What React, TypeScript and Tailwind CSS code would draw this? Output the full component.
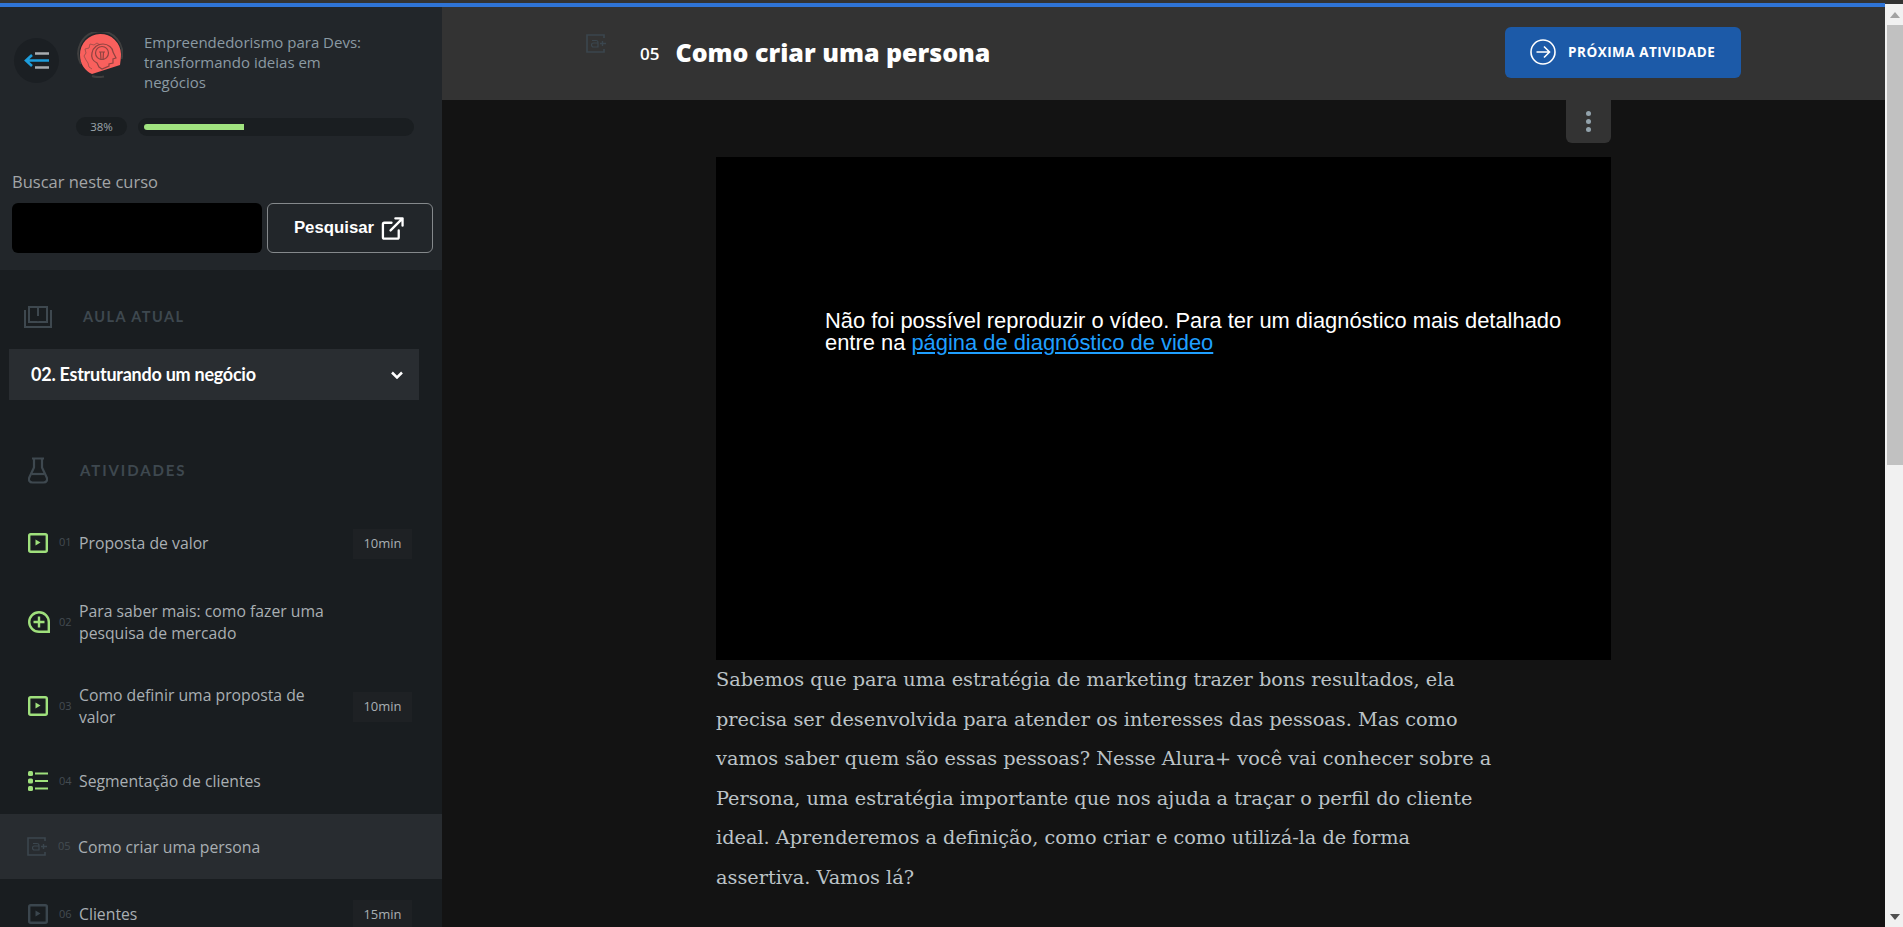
const SIDE_TEXT = 'font-["Open_Sans",sans-serif]'

function BackIcon() {
  return (
    <svg width="25" height="17" viewBox="0 0 25 17" fill="none">
      <path d="M11 1.500h14M11 15.500h14" stroke="#a8adb1" strokeWidth="2.600" />
      <path d="M25 8.500H2M8 3 2 8.500 8 14" stroke="#1d9ddc" strokeWidth="2.600" />
    </svg>
  )
}

function CourseLogo() {
  return (
    <svg width="46" height="46" viewBox="0 0 46 46" fill="none">
      <path d="M4 32A22 22 0 1 1 44.500 27M15 44a22 22 0 0 0 12 .500" stroke="#3f3f3f" strokeWidth="2" />
      <path d="M3 23a20.500 20.500 0 0 1 41-1c0 4-.5 7-1 11L15 42C8 39 3 32 3 23Z" fill="#f9605d" />
      <path d="M9 28l-2-4 2-3-1-4 4-1 1-4 4 1 3-2 3 2M9 28l2 3 1 4 3 2" stroke="#a9504c" strokeWidth="1" />
      <path d="M20 31c-4-2-6-6-5-10 1-6 6-9 11-9s10 4 10 8l3 6-3 1v4l-4 1v2l-7 3-3-2-2-4Z" stroke="#8f4340" strokeWidth="1.200" />
      <circle cx="25" cy="21" r="6.500" stroke="#8f4340" strokeWidth="1.200" />
      <path d="M22 20h6M23.500 20l.5 8M26.500 20l-.5 8" stroke="#8f4340" strokeWidth="1.200" />
    </svg>
  )
}

function ExternalIcon() {
  return (
    <svg width="23" height="23" viewBox="0 0 24 24" fill="none" stroke="#fff" strokeWidth="2.400" strokeLinecap="round" strokeLinejoin="round">
      <path d="M11 6H3.500A1.500 1.500 0 0 0 2 7.500V21a1.500 1.500 0 0 0 1.500 1.500H17a1.500 1.500 0 0 0 1.500-1.500v-7" />
      <path d="M15 1.500h7.500V9M22.500 1.500 10 14" />
    </svg>
  )
}

function BookIcon() {
  return (
    <svg width="28" height="22" viewBox="0 0 28 22" fill="none" stroke="#3e484f" strokeWidth="2">
      <path d="M5 16V1h8c1 0 1 1 1 2 0-1 0-2 1-2h8v15h-8c-1 0-1 1-1 1s0-1-1-1H5Z" />
      <path d="M1 4v17h26V4" />
      <path d="M14 3v7" />
    </svg>
  )
}

function FlaskIcon() {
  return (
    <svg width="20" height="27" viewBox="0 0 20 27" fill="none" stroke="#3e484f" strokeWidth="2.200" strokeLinejoin="round">
      <path d="M4 1.500h12M6 1.500v9L1.500 20c-1.500 3 0 5.500 3 5.500h11c3 0 4.500-2.500 3-5.500L14 10.500v-9" />
      <path d="M4 17h12" />
    </svg>
  )
}

function VideoIcon({ color }: { color: string }) {
  return (
    <svg width="20" height="20" viewBox="0 0 20 20" fill="none">
      <rect x="1.200" y="1.200" width="17.600" height="17.600" rx="1.500" stroke={color} strokeWidth="2.400" />
      <path d="M7.500 6.500v6l5-3-5-3Z" fill={color} />
    </svg>
  )
}

function PlusIcon() {
  return (
    <svg width="22" height="22" viewBox="0 0 22 22" fill="none" stroke="#9fe07c" strokeWidth="2.400">
      <path d="M20.500 20.800H11a9.800 9.800 0 1 1 9.800-9.800v9.800Z" />
      <path d="M11 5.500v11M5.500 11h11" />
    </svg>
  )
}

function ListIcon() {
  return (
    <svg width="20" height="20" viewBox="0 0 20 20" fill="#9fe07c">
      <rect x="0" y="0" width="5" height="5" rx="1.500" />
      <rect x="0" y="7.500" width="5" height="5" rx="1.500" />
      <rect x="0" y="15" width="5" height="5" rx="1.500" />
      <rect x="7" y="1.500" width="13" height="2" />
      <rect x="7" y="9" width="13" height="2" />
      <rect x="7" y="16.500" width="13" height="2" />
    </svg>
  )
}

function AluraPlusIcon() {
  return (
    <svg width="20" height="19" viewBox="0 0 20 19" fill="none" stroke="#3b464e" strokeWidth="1.600">
      <path d="M18 4V1H1v17h17v-3" />
      <path d="M6 6.500h4c1.500 0 2 .8 2 2V13H7.500C6 13 5.500 12 5.500 11s.5-2 2-2H12" strokeWidth="1.200" />
      <path d="M16.500 7v5M14 9.500h6" strokeWidth="1.400" />
    </svg>
  )
}

function ArrowCircleIcon() {
  return (
    <svg width="26" height="26" viewBox="0 0 26 26" fill="none" stroke="#fff" strokeWidth="1.600">
      <circle cx="13" cy="13" r="12" />
      <path d="M6.500 13h13M14 7.500l5.500 5.500-5.500 5.500" />
    </svg>
  )
}

function ActivityRow({ num, title, icon, duration, rowClass, active }: {
  num: string
  title: string
  icon: React.ReactNode
  duration?: string
  rowClass: string
  active?: boolean
}) {
  return (
    <div className={`flex items-center pr-[30px] ${active ? 'pl-[27px] bg-[#282c30]' : 'pl-[28px]'} ${rowClass}`}>
      <div className="flex w-[22px] shrink-0 justify-start">{icon}</div>
      <span className="ml-[9px] w-[20px] shrink-0 text-[11px] text-[#444c52]">{num}</span>
      <span className="w-[250px] text-[15.750px] leading-[22px] text-[#a9afb3]">{title}</span>
      {duration && (
        <span className="ml-auto mt-[2px] flex h-[30px] w-[59px] items-center justify-center bg-[#1e2124] text-[13px] text-[#a9afb3]">
          {duration}
        </span>
      )}
    </div>
  )
}

export default function App() {
  return (
    <div className={`flex h-[927px] overflow-hidden bg-[#131313] ${SIDE_TEXT}`}>
      <div className="flex w-[1885px] shrink-0 flex-col">
        <div className="h-[3px] bg-[#333333]" />
        <div className="h-1 bg-[#2f74d6]" />
        <div className="flex min-h-0 flex-1">
          <aside className="flex w-[442px] shrink-0 flex-col overflow-hidden bg-[#191d20]">
            <div className="h-[263px] shrink-0 bg-[#22262a] pl-[12px] pr-[9px]">
              <div className="flex pt-[25px]">
                <div className="ml-[2px] mt-[6px] flex h-[45px] w-[45px] shrink-0 items-center justify-center rounded-full bg-[#1b1f23]">
                  <BackIcon />
                </div>
                <div className="ml-[18px] shrink-0">
                  <CourseLogo />
                </div>
                <p className="ml-[21px] w-[240px] text-[15px] leading-[20px] text-[#8b9aa3]">
                  Empreendedorismo para Devs: transformando ideias em negócios
                </p>
              </div>
              <div className="ml-[64px] mt-[25px] flex items-center gap-[11px]">
                <span className="flex h-[19px] w-[51px] items-center justify-center rounded-full bg-[#1a1e21] text-[11.500px] text-[#9aa5ab]">
                  38%
                </span>
                <div className="flex h-[18px] w-[276px] items-center rounded-full bg-[#1a1e21] pl-[6px]">
                  <div className="h-[6px] w-[100px] rounded-l-full bg-[#a0e37f]" />
                </div>
              </div>
              <p className="mt-[35px] text-[16.500px] leading-[22px] text-[#a3a5a7]">Buscar neste curso</p>
              <div className="mt-[10px] flex gap-[5px]">
                <div className="h-[50px] w-[250px] rounded-md bg-black" />
                <button className="flex h-[50px] w-[166px] items-center justify-center gap-[7px] rounded-md border border-[#85898c] pr-[2px] font-['Liberation_Sans',sans-serif] text-[16.800px] font-bold text-white">
                  Pesquisar
                  <ExternalIcon />
                </button>
              </div>
            </div>

            <div className="flex items-center pl-[24px] pt-[36px] font-['Lato',sans-serif]">
              <BookIcon />
              <span className="ml-[31px] text-[14.500px] font-bold tracking-[1.500px] text-[#3e484f]">AULA ATUAL</span>
            </div>
            <div className="ml-[9px] mt-[21px] flex h-[51px] w-[410px] shrink-0 items-center justify-between bg-[#292d31] pl-[22px] pr-[16px] font-['Lato',sans-serif] text-[18px] font-bold tracking-[-0.250px] text-white">
              02. Estruturando um negócio
              <svg width="12" height="8" viewBox="0 0 12 8" fill="none" stroke="#fff" strokeWidth="2.500">
                <path d="M1 1.500 6 6.500l5-5" />
              </svg>
            </div>
            <div className="flex items-center pl-[28px] pt-[57px] font-['Lato',sans-serif]">
              <FlaskIcon />
              <span className="ml-[32px] text-[15px] font-bold tracking-[1.900px] text-[#3e484f]">ATIVIDADES</span>
            </div>

            <div className="mt-[29px] flex flex-col">
              <ActivityRow rowClass="h-[59px]" num="01" title="Proposta de valor" duration="10min" icon={<VideoIcon color="#9fe07c" />} />
              <ActivityRow rowClass="h-[84px] mt-[8px]" num="02" title="Para saber mais: como fazer uma pesquisa de mercado" icon={<PlusIcon />} />
              <ActivityRow rowClass="h-[84px]" num="03" title="Como definir uma proposta de valor" duration="10min" icon={<VideoIcon color="#9fe07c" />} />
              <ActivityRow rowClass="h-[66px]" num="04" title="Segmentação de clientes" icon={<ListIcon />} />
              <ActivityRow rowClass="h-[65px]" active num="05" title="Como criar uma persona" icon={<AluraPlusIcon />} />
              <ActivityRow rowClass="h-[70px]" num="06" title="Clientes" duration="15min" icon={<VideoIcon color="#3b464e" />} />
            </div>
          </aside>

          <main className="flex min-w-0 flex-1 flex-col">
            <header className="flex h-[93px] shrink-0 items-center bg-[#333333] pl-[144px] pr-[144px]">
              <div className="mb-[20px]">
                <AluraPlusIcon />
              </div>
              <span className="ml-[34px] text-[17px] font-semibold text-white">05</span>
              <h1 className="mb-[2px] ml-[16px] text-[25px] font-extrabold text-white">Como criar uma persona</h1>
              <button className="mb-[3px] ml-auto flex h-[51px] w-[236px] items-center rounded-md bg-[#1c5aa8] pl-[25px] text-[13.500px] font-bold tracking-[0.500px] text-white">
                <ArrowCircleIcon />
                <span className="ml-[12px]">PRÓXIMA ATIVIDADE</span>
              </button>
            </header>

            <div className="pl-[274px]">
              <div className="flex w-[895px] justify-end">
                <div className="flex h-[43px] w-[45px] flex-col items-center justify-center gap-[3px] rounded-b-md bg-[#333333]">
                  <span className="h-[5px] w-[5px] rounded-full bg-[#93a3ac]" />
                  <span className="h-[5px] w-[5px] rounded-full bg-[#93a3ac]" />
                  <span className="h-[5px] w-[5px] rounded-full bg-[#93a3ac]" />
                </div>
              </div>
              <div className="mt-[14px] h-[503px] w-[895px] bg-black pl-[109px] pt-[153px] font-['Liberation_Sans',sans-serif] text-[21.900px] leading-[22px] text-white">
                <p className="w-[745px]">
                  Não foi possível reproduzir o vídeo. Para ter um diagnóstico mais detalhado entre na{' '}
                  <a className="text-[#1f9fff] underline">página de diagnóstico de video</a>
                </p>
              </div>
              <p className="w-[780px] font-['DejaVu_Serif',serif] text-[19.300px] leading-[39.600px] text-[#bcc3c7]">
                Sabemos que para uma estratégia de marketing trazer bons resultados, ela precisa ser desenvolvida para atender os interesses das pessoas. Mas como vamos saber quem são essas pessoas? Nesse Alura+ você vai conhecer sobre a Persona, uma estratégia importante que nos ajuda a traçar o perfil do cliente ideal. Aprenderemos a definição, como criar e como utilizá-la de forma assertiva. Vamos lá?
              </p>
            </div>
          </main>
        </div>
      </div>

      <div className="flex w-[18px] shrink-0 flex-col bg-[#333333]">
        <div className="h-1 shrink-0" />
        <div className="flex flex-1 flex-col bg-[#f1f1f1]">
          <div className="flex h-[21px] items-center justify-center pl-[2px]">
            <svg width="10" height="6" viewBox="0 0 10 6" fill="#a3a3a3"><path d="M5 0l5 6H0z" /></svg>
          </div>
          <div className="ml-[2px] h-[440px] w-[16px] bg-[#c1c1c1]" />
          <div className="mt-auto flex h-[21px] items-center justify-center pl-[2px]">
            <svg width="10" height="6" viewBox="0 0 10 6" fill="#505050"><path d="M5 6l5-6H0z" /></svg>
          </div>
        </div>
      </div>
    </div>
  )
}
